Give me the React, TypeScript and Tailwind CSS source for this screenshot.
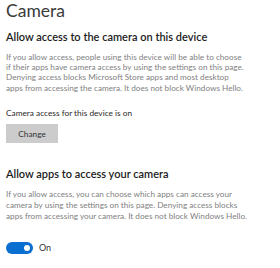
const Toggle = () => (
  <div className="flex items-center gap-[6px]">
    <div className="w-[27px] h-[12px] rounded-full bg-[#0a6fd0] flex items-center justify-end pr-[3px]">
      <div className="w-[6px] h-[6px] rounded-full bg-white"></div>
    </div>
    <span className="text-[9px] text-[#333]">On</span>
  </div>
);

const App = () => {
  return (
    <div className="w-[280px] h-[268px] bg-white overflow-hidden px-[6px] font-['Lato',sans-serif]">
      <h1 className="text-[17.5px] leading-[22px] text-[#3a3a3a]">Camera</h1>

      <section className="mt-[8px]">
        <h2 className="text-[11px] leading-[14px] font-semibold text-[#1c1c1c]">
          Allow access to the camera on this device
        </h2>
        <p className="mt-[7.5px] whitespace-nowrap text-[8.2px] leading-[10.4px] text-[#7f7f7f]">
          If you allow access, people using this device will be able to choose
          <br />
          if their apps have camera access by using the settings on this page.
          <br />
          Denying access blocks Microsoft Store apps and most desktop
          <br />
          apps from accessing the camera. It does not block Windows Hello.
        </p>
        <p className="mt-[14.5px] text-[8.3px] leading-[11px] text-[#2a2a2a]">
          Camera access for this device is on
        </p>
        <button className="mt-[4px] w-[52px] h-[19px] bg-[#cccccc] text-[8.3px] text-[#333]">
          Change
        </button>
      </section>

      <section className="mt-[24px]">
        <h2 className="text-[11px] leading-[14px] font-semibold text-[#1c1c1c]">
          Allow apps to access your camera
        </h2>
        <p className="mt-[7.5px] whitespace-nowrap text-[8.2px] leading-[11px] text-[#7f7f7f]">
          If you allow access, you can choose which apps can access your
          <br />
          camera by using the settings on this page. Denying access blocks
          <br />
          apps from accessing your camera. It does not block Windows Hello.
        </p>
        <div className="mt-[19px]">
          <Toggle />
        </div>
      </section>
    </div>
  );
};

export default App;
